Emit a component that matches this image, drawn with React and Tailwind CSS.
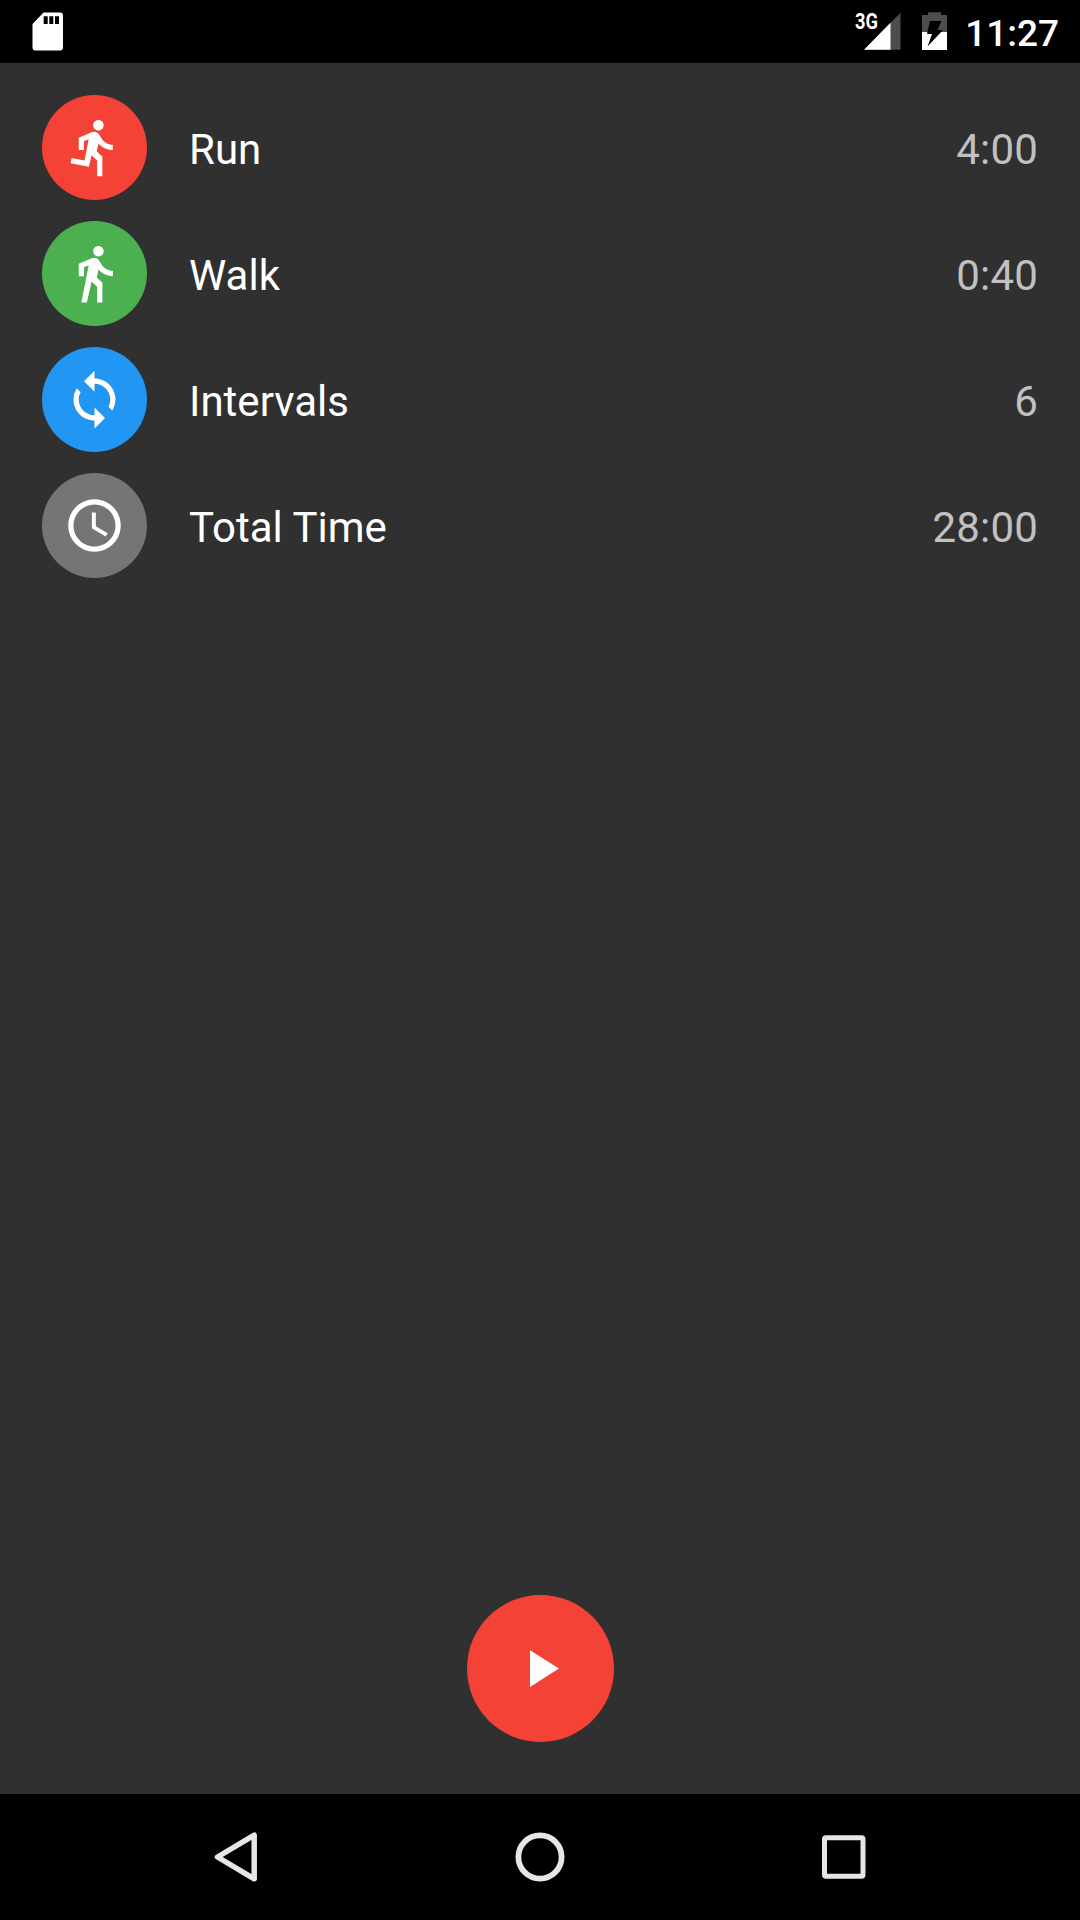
const ICONS = {
  run: 'M13.49 5.48c1.1 0 2-.9 2-2s-.9-2-2-2-2 .9-2 2 .9 2 2 2zm-3.6 13.9l1-4.4 2.1 2v6h2v-7.5l-2.1-2 .6-3c1.3 1.5 3.3 2.5 5.5 2.5v-2c-1.9 0-3.5-1-4.3-2.4l-1-1.6c-.4-.6-1-1-1.7-1-.3 0-.5.1-.8.1l-5.2 2.2v4.7h2v-3.4l1.8-.7-1.6 8.1-4.9-1-.4 2 7 1.4z',
  walk: 'M13.5 5.5c1.1 0 2-.9 2-2s-.9-2-2-2-2 .9-2 2 .9 2 2 2zM9.8 8.9L7 23h2.1l1.8-8 2.1 2v6h2v-7.5l-2.1-2 .6-3C14.8 12 16.8 13 19 13v-2c-1.9 0-3.5-1-4.3-2.4l-1-1.6c-.4-.6-1-1-1.7-1-.3 0-.5.1-.8.1L6 8.3V13h2V9.6l1.8-.7z',
  sync: 'M12 4V1L8 5l4 4V6c3.31 0 6 2.69 6 6 0 1.01-.25 1.97-.7 2.8l1.46 1.46A7.93 7.93 0 0 0 20 12c0-4.42-3.58-8-8-8zm0 14c-3.31 0-6-2.69-6-6 0-1.01.25-1.97.7-2.8L5.24 7.74A7.93 7.93 0 0 0 4 12c0 4.42 3.58 8 8 8v3l4-4-4-4v3z',
  clock: 'M11.99 2C6.47 2 2 6.48 2 12s4.47 10 9.99 10C17.52 22 22 17.52 22 12S17.52 2 11.99 2zM12 20c-4.42 0-8-3.58-8-8s3.58-8 8-8 8 3.58 8 8-3.58 8-8 8zm.5-13H11v6l5.25 3.15.75-1.23-4.5-2.67z',
  play: 'M8 5v14l11-7z',
};

const ROWS = [
  { icon: 'run', label: 'Run', value: '4:00', color: 'bg-[#f44336]' },
  { icon: 'walk', label: 'Walk', value: '0:40', color: 'bg-[#4caf50]' },
  { icon: 'sync', label: 'Intervals', value: '6', color: 'bg-[#2196f3]' },
  { icon: 'clock', label: 'Total Time', value: '28:00', color: 'bg-[#757575]' },
];

function Icon({ name }) {
  return (
    <svg viewBox="0 0 24 24" className="size-[63px] shrink-0 fill-white">
      <path d={ICONS[name]} />
    </svg>
  );
}

function StatusBar() {
  return (
    <header className="flex h-[63px] shrink-0 items-start bg-black pl-8 pr-[21px] text-white">
      <svg viewBox="0 0 31 63" className="h-[63px] w-[31px]">
        <path fill="#fff" d="M11.5 12.5H28a3 3 0 0 1 3 3V47.500a3 3 0 0 1-3 3H3.500a3 3 0 0 1-3-3V24z" />
        <path d="M11.700 16.300h4v7.700h-4zM17.300 16.300h4v7.700h-4zM23 16.300h4v7.700h-4z" />
      </svg>
      <div className="relative ml-auto">
        <svg viewBox="0 0 37 63" className="h-[63px] w-[37px]">
          <path fill="#4d4d4d" d="M36.500 12.700V49.700H0z" />
          <path fill="#fff" d="M26.500 22.800V49.700H0z" />
        </svg>
        <span className="absolute -left-[9px] top-[11px] origin-left scale-x-[0.83] text-[22px] leading-[22px] font-bold">3G</span>
      </div>
      <svg viewBox="0 0 25 63" className="ml-[21px] h-[63px] w-[25px]">
        <path fill="#4d4d4d" d="M6 12.300h13V15h6v35H0V15h6z" />
        <path fill="#fff" d="M0 32h25v18H0z" />
        <path d="M8 21h11.500L15.500 30h5.500L5.500 46.500 10 34H5z" />
      </svg>
      <span className="ml-[18px] mt-[12px] text-[37px] leading-[43px] font-medium">11:27</span>
    </header>
  );
}

function Row({ icon, label, value, color }) {
  return (
    <li className="flex h-[126px] items-center">
      <span className={`flex size-[105px] items-center justify-center rounded-full ${color}`}>
        <Icon name={icon} />
      </span>
      <span className="ml-[42px] mt-[5px] text-white">{label}</span>
      <span className="ml-auto mt-[5px] tracking-[0.2px] text-[#c1c1c1]">{value}</span>
    </li>
  );
}

function NavBar() {
  return (
    <nav className="flex h-[126px] shrink-0 items-center justify-center gap-[240px] bg-black">
      <button aria-label="Back">
        <svg viewBox="0 0 64 64" className="size-16" fill="none" stroke="#e6e6e6" strokeWidth="5.500" strokeLinejoin="round">
          <path d="M50.200 10.200V53.800L13.500 32z" />
        </svg>
      </button>
      <button aria-label="Home">
        <svg viewBox="0 0 64 64" className="size-16" fill="none" stroke="#e6e6e6" strokeWidth="5.800">
          <circle cx="32" cy="32" r="21.600" />
        </svg>
      </button>
      <button aria-label="Recent apps">
        <svg viewBox="0 0 64 64" className="size-16" fill="none" stroke="#e6e6e6" strokeWidth="5">
          <rect x="12.500" y="12.800" width="38.500" height="38.500" rx="1.500" />
        </svg>
      </button>
    </nav>
  );
}

export default function App() {
  return (
    <div className="flex h-[1920px] w-[1080px] flex-col overflow-hidden bg-[#303030] font-['Roboto',sans-serif]">
      <StatusBar />
      <main className="flex flex-1 flex-col">
        <ul className="px-[42px] pt-[21px] text-[42px] leading-[50px]">
          {ROWS.map((row) => (
            <Row key={row.icon} {...row} />
          ))}
        </ul>
        <button
          aria-label="Start"
          className="mx-auto mb-[52px] mt-auto flex size-[147px] items-center justify-center rounded-full bg-[#f44336]"
        >
          <Icon name="play" />
        </button>
      </main>
      <NavBar />
    </div>
  );
}
